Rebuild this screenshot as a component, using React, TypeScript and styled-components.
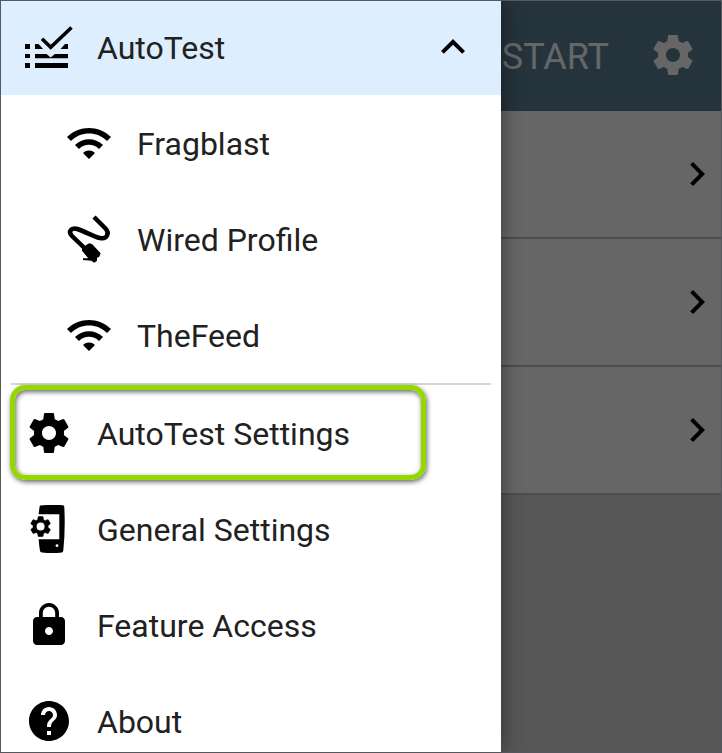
import React from "react";
import styled, { createGlobalStyle, css } from "styled-components";

const GlobalStyle = createGlobalStyle`
  *, *::before, *::after { box-sizing: border-box; }
  body { margin: 0; font-family: Roboto, "Noto Sans", sans-serif; }
  button { font: inherit; color: inherit; border: 0; padding: 0; background: none; text-align: left; cursor: pointer; }
`;

const Screen = styled.div`
  display: grid;
  grid-template: minmax(0, 1fr) / minmax(0, 1fr);
  height: 100vh;
  border: 1px solid #57585e;
  overflow: hidden;
  background: #dadada;

  > * {
    grid-area: 1 / 1;
  }
`;

const Page = styled.main`
  display: flex;
  flex-direction: column;
`;

const AppBar = styled.header`
  display: flex;
  align-items: center;
  justify-content: flex-end;
  gap: 40px;
  height: 110px;
  padding: 0 24px 2px 0;
  background: #5d8097;
  color: #ffffff;
`;

const StartButton = styled.button`
  && {
    padding-top: 4px;
    font-size: 36px;
    line-height: 44px;
  }
`;

const IconButton = styled.button`
  display: flex;
`;

const TestRow = styled.button`
  display: flex;
  align-items: center;
  justify-content: flex-end;
  height: 128px;
  && {
    background: #ffffff;
    color: #000000;
    border-bottom: 2px solid #bebebe;
  }
`;

const Scrim = styled.div`
  background: rgba(0, 0, 0, 0.6);
`;

const Drawer = styled.nav`
  width: 500px;
  max-width: 90vw;
  background: #ffffff;
  box-shadow: 0 0 20px rgba(0, 0, 0, 0.45);
  overflow: hidden;
`;

const Group = styled.div`
  display: flex;
  flex-direction: column;
`;

const DrawerHeader = styled.button`
  display: flex;
  align-items: center;
  gap: 24px;
  width: 100%;
  height: 94px;
  color: #000000;
  && {
    padding: 0 24px 2px;
    background: #ddeeff;
  }
`;

const Item = styled.button<{ $nested?: boolean; $marked?: boolean }>`
  display: flex;
  align-items: center;
  gap: 24px;
  width: 100%;
  height: 96px;
  color: #000000;
  && {
    padding: 0 24px 0 ${(p) => (p.$nested ? 64 : 24)}px;
  }
  ${(p) =>
    p.$marked &&
    css`
      position: relative;
      &::after {
        content: "";
        position: absolute;
        inset: 0 75px 1px 9px;
        border: 5px solid #97d700;
        border-radius: 15px;
        box-shadow:
          1px 2px 5px rgba(0, 0, 0, 0.6),
          inset 1px 2px 5px rgba(0, 0, 0, 0.6);
        pointer-events: none;
      }
    `}
`;

const Label = styled.span`
  flex: 1;
  font-size: 32px;
  line-height: 40px;
  padding-top: 2px;
  color: #212121;
  white-space: nowrap;
`;

const Divider = styled.hr`
  height: 2px;
  margin: 0 10px;
  border: 0;
  background: #d6d6d6;
`;

const Icon = styled.svg`
  flex: none;
  width: 48px;
  height: 48px;
  fill: currentColor;
`;

const GEAR =
  "M19.43 12.98c.04-.32.07-.64.07-.98s-.03-.66-.07-.98l2.11-1.65c.19-.15.24-.42.12-.64l-2-3.46c-.12-.22-.39-.3-.61-.22l-2.49 1c-.52-.4-1.08-.73-1.69-.98l-.38-2.65C14.46 2.18 14.25 2 14 2h-4c-.25 0-.46.18-.49.42l-.38 2.65c-.61.25-1.17.59-1.69.98l-2.49-1c-.23-.09-.49 0-.61.22l-2 3.46c-.13.22-.07.49.12.64l2.11 1.65c-.04.32-.07.65-.07.98s.03.66.07.98l-2.11 1.65c-.19.15-.24.42-.12.64l2 3.46c.12.22.39.3.61.22l2.49-1c.52.4 1.08.73 1.69.98l.38 2.65c.03.24.24.42.49.42h4c.25 0 .46-.18.49-.42l.38-2.65c.61-.25 1.17-.59 1.69-.98l2.49 1c.23.09.49 0 .61-.22l2-3.46c.12-.22.07-.49-.12-.64l-2.11-1.65zM12 15.5c-1.93 0-3.5-1.57-3.5-3.5s1.57-3.5 3.5-3.5 3.5 1.57 3.5 3.5-1.57 3.5-3.5 3.5z";

const GearIcon = () => (
  <Icon viewBox="0 0 24 24" aria-hidden="true">
    <path d={GEAR} />
  </Icon>
);

const ChevronRight = () => (
  <Icon viewBox="0 0 24 24" aria-hidden="true">
    <path d="M10 6L8.59 7.41 13.17 12l-4.58 4.59L10 18l6-6z" />
  </Icon>
);

const ChevronUp = () => (
  <Icon viewBox="0 0 24 24" aria-hidden="true">
    <path d="M12 8l-6 6 1.41 1.41L12 10.83l4.59 4.58L18 14z" />
  </Icon>
);

const WifiIcon = () => (
  <Icon viewBox="0 0 24 24" aria-hidden="true">
    <path d="M1 9l2 2c4.97-4.97 13.03-4.97 18 0l2-2C16.93 2.93 7.08 2.93 1 9zm8 8l3 3 3-3c-1.65-1.66-4.34-1.66-6 0zm-4-4l2 2c2.76-2.76 7.24-2.76 10 0l2-2C15.14 9.14 8.87 9.14 5 13z" />
  </Icon>
);

const LockIcon = () => (
  <Icon viewBox="0 0 24 24" aria-hidden="true">
    <path d="M18 8h-1V6c0-2.76-2.24-5-5-5S7 3.24 7 6v2H6c-1.1 0-2 .9-2 2v10c0 1.1.9 2 2 2h12c1.1 0 2-.9 2-2V10c0-1.1-.9-2-2-2zm-6 9c-1.1 0-2-.9-2-2s.9-2 2-2 2 .9 2 2-.9 2-2 2zm3.1-9H8.9V6c0-1.71 1.39-3.1 3.1-3.1 1.71 0 3.1 1.39 3.1 3.1v2z" />
  </Icon>
);

const HelpIcon = () => (
  <Icon viewBox="0 0 24 24" aria-hidden="true">
    <path d="M12 2C6.48 2 2 6.48 2 12s4.48 10 10 10 10-4.48 10-10S17.52 2 12 2zm1 17h-2v-2h2v2zm2.07-7.75l-.9.92C13.45 12.9 13 13.5 13 15h-2v-.5c0-1.1.45-2.1 1.17-2.83l1.24-1.26c.37-.36.59-.86.59-1.41 0-1.1-.9-2-2-2s-2 .9-2 2H8c0-2.21 1.79-4 4-4s4 1.79 4 4c0 .88-.36 1.68-.93 2.25z" />
  </Icon>
);

const ChecklistIcon = () => (
  <Icon viewBox="0 0 48 48" aria-hidden="true">
    <path d="M0 21h5v5H0zM0 31h5v4H0zM0 40h5v5H0zM10 40h33v5H10z" />
    <path d="M10 21h3.500l4.500 5h-8zM43 21v5h-7.500l4.500-5z" />
    <path d="M10 31h11.500l4.200 3.600 4.200-3.600H43v4.200H10z" />
    <path d="M17 15.800l8.700 8.500L46.500 4.500" fill="none" stroke="currentColor" strokeWidth="3.600" />
  </Icon>
);

const CableIcon = () => (
  <Icon viewBox="0 0 48 48" aria-hidden="true">
    <path
      d="M29 2L40.500 13.500C45 18 42 24.500 35 23 28 21.500 20 16.500 12.500 14 6 12 2.800 16.500 7 21L20.500 34"
      fill="none"
      stroke="currentColor"
      strokeWidth="4.500"
    />
    <path d="M17 33.500l3.500-3 3.500-2.300 3 .8 8.700 9.300-1.400 3.400-2.300 1v3l-2.700 2-3-2-8.300-.7v-1.700h5.200L17 35.700z" />
  </Icon>
);

const DeviceIcon = () => (
  <Icon viewBox="0 0 48 48" aria-hidden="true">
    <path
      fillRule="evenodd"
      d="M15.300 .4Q27 -.6 38 .2 39.200 .3 39.300 2 40.500 24 38.300 45.500 38.200 47 37 47.400 27 48.400 17 47.400 15.200 47.200 15 46 14 40 13.700 34.200H34.300V9.200H13.700Q14 5 14.700 1.200 14.800 .5 15.300 .4zM32 39.300a1.400 1.400 0 1 0 0 2.800 1.400 1.400 0 1 0 0-2.800z"
    />
    <g transform="translate(3.600 9.600)">
      <path d={GEAR} stroke="currentColor" strokeWidth="0.600" />
      <circle cx="12" cy="12" r="4" fill="#ffffff" />
    </g>
  </Icon>
);

const tests = ["First test", "Second test", "Third test"];

const profiles = [
  { name: "Fragblast", icon: <WifiIcon /> },
  { name: "Wired Profile", icon: <CableIcon /> },
  { name: "TheFeed", icon: <WifiIcon /> },
];

const links = [
  { name: "AutoTest Settings", icon: <GearIcon />, marked: true },
  { name: "General Settings", icon: <DeviceIcon /> },
  { name: "Feature Access", icon: <LockIcon /> },
  { name: "About", icon: <HelpIcon /> },
];

export default function App() {
  return (
    <>
      <GlobalStyle />
      <Screen>
        <Page>
          <AppBar>
            <StartButton type="button">START</StartButton>
            <IconButton type="button" aria-label="Settings">
              <GearIcon />
            </IconButton>
          </AppBar>
          {tests.map((name) => (
            <TestRow key={name} type="button" aria-label={name}>
              <ChevronRight />
            </TestRow>
          ))}
        </Page>
        <Scrim />
        <Drawer aria-label="Main menu">
          <DrawerHeader type="button" aria-expanded="true">
            <ChecklistIcon />
            <Label>AutoTest</Label>
            <ChevronUp />
          </DrawerHeader>
          <Group>
            {profiles.map((p) => (
              <Item key={p.name} type="button" $nested>
                {p.icon}
                <Label>{p.name}</Label>
              </Item>
            ))}
          </Group>
          <Divider />
          <Group>
            {links.map((l) => (
              <Item key={l.name} type="button" $marked={l.marked}>
                {l.icon}
                <Label>{l.name}</Label>
              </Item>
            ))}
          </Group>
        </Drawer>
      </Screen>
    </>
  );
}
